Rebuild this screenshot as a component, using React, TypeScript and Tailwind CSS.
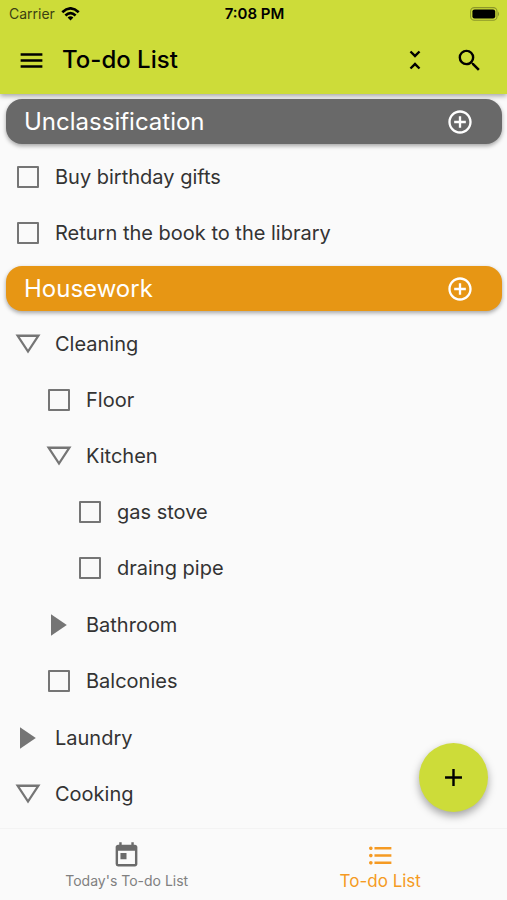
import React, { useState } from "react";
import {
  MdMenu,
  MdUnfoldLess,
  MdSearch,
  MdAddCircleOutline,
  MdAdd,
  MdToday,
  MdFormatListBulleted,
} from "react-icons/md";

type Task = { name: string; open?: boolean; children?: Task[] };

const unclassified: Task[] = [
  { name: "Buy birthday gifts" },
  { name: "Return the book to the library" },
];

const housework: Task[] = [
  {
    name: "Cleaning",
    open: true,
    children: [
      { name: "Floor" },
      {
        name: "Kitchen",
        open: true,
        children: [{ name: "gas stove" }, { name: "draing pipe" }],
      },
      { name: "Bathroom", children: [] },
      { name: "Balconies" },
    ],
  },
  { name: "Laundry", children: [] },
  { name: "Cooking", open: true, children: [] },
];

function Triangle({ open }: { open: boolean }) {
  return open ? (
    <svg width="26" height="20" viewBox="0 0 26 20" aria-hidden="true">
      <path
        fill="#757575"
        fillRule="evenodd"
        d="M0.5 0.5h25L13 19.5zM4.8 2.9L13 15.4L21.2 2.9z"
      />
    </svg>
  ) : (
    <svg width="26" height="22" viewBox="0 0 26 22" aria-hidden="true">
      <path fill="#757575" d="M5 0.3L20.8 11L5 21.7z" />
    </svg>
  );
}

function TaskRow({ task }: { task: Task }) {
  const [open, setOpen] = useState(Boolean(task.open));
  return (
    <li>
      {task.children ? (
        <button
          type="button"
          aria-expanded={open}
          onClick={() => setOpen(!open)}
          className="flex h-14 w-full items-center gap-3.5 text-left"
        >
          <span className="flex w-[26px] justify-center">
            <Triangle open={open} />
          </span>
          <span>{task.name}</span>
        </button>
      ) : (
        <label className="flex h-14 items-center gap-3.5">
          <span className="flex w-[26px] justify-center">
            <input
              type="checkbox"
              className="size-[22px] appearance-none rounded-[1px] border-2 border-[#757575] checked:bg-[#757575]"
            />
          </span>
          <span>{task.name}</span>
        </label>
      )}
      {task.children && task.children.length > 0 && open && (
        <ul className="pb-px pl-[31px]">
          {task.children.map((child) => (
            <TaskRow key={child.name} task={child} />
          ))}
        </ul>
      )}
    </li>
  );
}

function Section({ title, color, tasks }: { title: string; color: string; tasks: Task[] }) {
  return (
    <section className="px-[5px] pt-[5px]">
      <div
        className={`ml-px flex h-[45px] items-center justify-between rounded-2xl pr-7 pl-[18px] text-white shadow-[0_2px_4px_rgba(0,0,0,0.35)] ${color}`}
      >
        <h2 className="text-2xl">{title}</h2>
        <button type="button" aria-label={`Add to ${title}`}>
          <MdAddCircleOutline size={28} />
        </button>
      </div>
      <ul className="pt-[5px] pl-2.5 text-xl text-[#333333]">
        {tasks.map((task) => (
          <TaskRow key={task.name} task={task} />
        ))}
      </ul>
    </section>
  );
}

function StatusBar() {
  return (
    <div className="grid h-7 grid-cols-3 items-center pr-[7px] pl-[9px] text-sm">
      <div className="flex items-center gap-1.5 text-[#3c4112]">
        <span>Carrier</span>
        <svg width="19" height="14" viewBox="0 0 18 14" aria-label="Wi-Fi" role="img">
          <g fill="none" stroke="#000" strokeWidth="2.7">
            <path d="M0.8 5.2Q9-2.4 17.2 5.2" />
            <path d="M3.9 8.4Q9 3.7 14.1 8.4" />
          </g>
          <path fill="#000" d="M6.1 10.6Q9 8.1 11.9 10.6L9 13.6z" />
        </svg>
      </div>
      <span className="text-center text-[15px] font-semibold">7:08 PM</span>
      <svg
        className="justify-self-end"
        width="30"
        height="14"
        viewBox="0 0 30 14"
        aria-label="Battery full"
        role="img"
      >
        <rect x="0.6" y="0.6" width="26.4" height="12.6" rx="3.8" fill="none" stroke="#8c972a" strokeWidth="1.1" />
        <rect x="2.4" y="2.4" width="22.8" height="9" rx="2.2" />
        <path d="M28 4.6Q30.2 6.9 28 9.2z" fill="#8c972a" />
      </svg>
    </div>
  );
}

export default function App() {
  return (
    <div className="flex min-h-screen flex-col bg-[#fafafa] font-['Inter','Liberation_Sans',sans-serif]">
      <header className="relative bg-[#cddc39] text-black shadow-[0_2px_5px_rgba(0,0,0,0.35)]">
        <StatusBar />
        <div className="flex h-[66px] items-center pr-[23px] pb-0.5 pl-[17px]">
          <button type="button" aria-label="Menu">
            <MdMenu size={29} />
          </button>
          <h1 className="ml-4 flex-1 text-2xl font-medium">To-do List</h1>
          <button type="button" aria-label="Collapse all" className="mr-[26px]">
            <MdUnfoldLess size={28} />
          </button>
          <button type="button" aria-label="Search">
            <MdSearch size={29} />
          </button>
        </div>
      </header>

      <main className="relative flex-1">
        <Section title="Unclassification" color="bg-[#696969]" tasks={unclassified} />
        <Section title="Housework" color="bg-[#e79614]" tasks={housework} />
        <button
          type="button"
          aria-label="Add task"
          className="absolute right-[19px] bottom-4 flex size-[69px] items-center justify-center rounded-full bg-[#cddc39] text-black shadow-[0_4px_8px_rgba(0,0,0,0.35)]"
        >
          <MdAdd size={29} />
        </button>
      </main>

      <nav className="grid h-[72px] grid-cols-2 border-t border-[#f3f3f3]">
        <a href="#today" className="flex flex-col items-center pt-3 text-sm leading-[22px] text-[#808080]">
          <MdToday size={29} className="text-[#6b6b6b]" />
          <span>Today's To-do List</span>
        </a>
        <a
          href="#list"
          aria-current="page"
          className="flex flex-col items-center pt-3 text-[17px] leading-[22px] text-[#f59a23]"
        >
          <MdFormatListBulleted size={29} />
          <span>To-do List</span>
        </a>
      </nav>
    </div>
  );
}
